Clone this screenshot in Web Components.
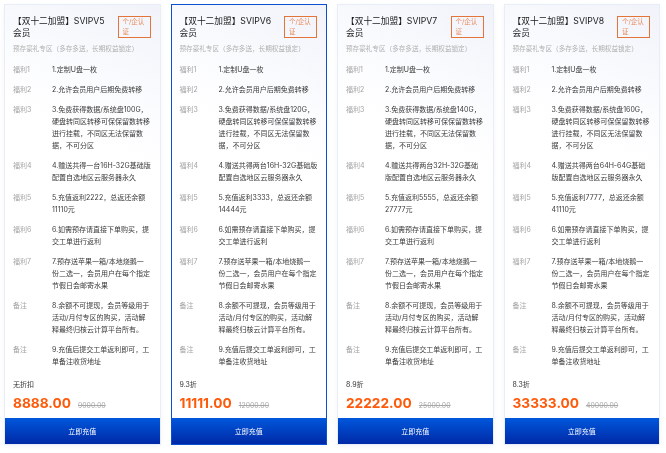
<!DOCTYPE html>
<html lang="zh">
<head>
<meta charset="utf-8">
<title>SVIP</title>
<style>
  html, body { margin: 0; padding: 0; background: #fff; }
  body { font-family: Inter, "Noto Sans CJK SC", sans-serif; }
</style>
</head>
<body>
<plan-list id="plans"></plan-list>

<template id="plan-row-tpl">
  <style>
    :host {
      display: grid;
      grid-template-columns: 39px 1fr;
      font-size: 7px;
      line-height: 12px;
      color: #3a3a3a;
    }
    .label { color: #a3a3a3; }
    .value { white-space: pre-line; }
  </style>
  <span class="label"><slot name="label"></slot></span>
  <span class="value"><slot></slot></span>
</template>

<template id="plan-card-tpl">
  <style>
    :host {
      display: flex;
      flex-direction: column;
      height: 439px;
      background: linear-gradient(205deg, #f1f3fa 0, #fbfcfe 22%, #fff 34%);
      box-shadow: 0 0 0 1px #e9edf7, 0 2px 6px rgba(60, 90, 170, 0.08);
    }
    :host([active]) { box-shadow: 0 0 0 1px #0a50d0; }
    /* the reference text is a little soft, it was scaled down */
    .title, .tag span, .sub, .rows, .discount, .price, button span { filter: blur(0.3px); }
    .head {
      display: flex;
      align-items: flex-start;
      gap: 4px;
      padding: 10px 9px 0 8px;
    }
    .title {
      flex: 1;
      font-size: 8.7px;
      line-height: 12px;
      color: #1a1a1a;
    }
    .tag {
      flex: none;
      box-sizing: border-box;
      width: 33px;
      height: 22px;
      margin-top: 1px;
      padding: 1px 4px;
      border: 1px solid #e3743a;
      font-size: 6.5px;
      line-height: 9.5px;
      color: #e88a5c;
    }
    .tag span { display: block; }
    .sub {
      margin: 4px 0 0 8px;
      font-size: 6.6px;
      line-height: 12px;
      color: #b0b0b0;
      white-space: nowrap;
    }
    .rows {
      display: flex;
      flex-direction: column;
      gap: 8px;
      padding: 9px 8px 0;
    }
    .discount {
      margin: 11px 0 0 8px;
      font-size: 7px;
      line-height: 12px;
      color: #333;
    }
    .price {
      display: flex;
      align-items: baseline;
      gap: 7px;
      margin: 4px 0 0 8px;
      line-height: 16px;
    }
    .now { font-size: 13.7px; font-weight: 700; color: #ff5a0a; }
    .old { font-size: 6.9px; color: #a8a8a8; text-decoration: line-through; }
    button {
      margin-top: auto;
      height: 26px;
      border: 0;
      padding: 0;
      font: inherit;
      font-size: 7px;
      color: #fff;
      background: linear-gradient(180deg, #0057dc, #0029a6);
    }
    button span { display: block; }
  </style>
  <div class="head">
    <div class="title"></div>
    <div class="tag"><span>个/企认证</span></div>
  </div>
  <div class="sub">预存豪礼专区（多存多送，长期权益锁定）</div>
  <div class="rows"><slot></slot></div>
  <div class="discount"></div>
  <div class="price"><span class="now"></span><span class="old"></span></div>
  <button type="button"><span>立即充值</span></button>
</template>

<script>
class PlanRow extends HTMLElement {
  constructor() {
    super();
    const tpl = document.getElementById("plan-row-tpl");
    this.attachShadow({ mode: "open" }).appendChild(tpl.content.cloneNode(true));
  }
}

class PlanCard extends HTMLElement {
  constructor() {
    super();
    const tpl = document.getElementById("plan-card-tpl");
    this.attachShadow({ mode: "open" }).appendChild(tpl.content.cloneNode(true));
  }

  connectedCallback() {
    const root = this.shadowRoot;
    root.querySelector(".title").textContent = this.getAttribute("name");
    root.querySelector(".discount").textContent = this.getAttribute("discount");
    root.querySelector(".now").textContent = this.getAttribute("price");
    root.querySelector(".old").textContent = this.getAttribute("old");
  }
}

// card contents, only the numbers differ between plans
const PLANS = [
  { level: "SVIPV5", disk: "100G", gift: "4.赠送共得一台16H-32G基础版\n配置自选地区云服务器永久", back: "2222", total: "11110", discount: "无折扣", price: "8888.00", old: "9000.00" },
  { level: "SVIPV6", disk: "120G", gift: "4.赠送共得两台16H-32G基础版\n配置自选地区云服务器永久", back: "3333", total: "14444", discount: "9.3折", price: "11111.00", old: "12000.00", active: true },
  { level: "SVIPV7", disk: "140G", gift: "4.赠送共得两台32H-32G基础\n版配置自选地区云服务器永久", back: "5555", total: "27777", discount: "8.9折", price: "22222.00", old: "25000.00" },
  { level: "SVIPV8", disk: "160G", gift: "4.赠送共得两台64H-64G基础\n版配置自选地区云服务器永久", back: "7777", total: "41110", discount: "8.3折", price: "33333.00", old: "40000.00" },
];

function rowsFor(p) {
  return [
    ["福利1", "1.定制U盘一枚"],
    ["福利2", "2.允许会员用户后期免费转移"],
    ["福利3", `3.免费获得数据/系统盘${p.disk}，\n硬盘转同区转移可保保留数转移\n进行挂载，不同区无法保留数\n据，不可分区`],
    ["福利4", p.gift],
    ["福利5", `5.充值返利${p.back}，总返还余额\n${p.total}元`],
    ["福利6", "6.如需预存请直接下单购买，提\n交工单进行返利"],
    ["福利7", "7.预存送苹果一箱/本地烧鹅一\n份二选一，会员用户在每个指定\n节假日会邮寄水果"],
    ["备注", "8.余额不可提现，会员等级用于\n活动/月付专区的购买，活动解\n释最终归核云计算平台所有。"],
    ["备注", "9.充值后提交工单返利即可，工\n单备注收货地址"],
  ];
}

class PlanList extends HTMLElement {
  constructor() {
    super();
    this.attachShadow({ mode: "open" }).innerHTML = `
      <style>
        :host {
          display: grid;
          grid-template-columns: repeat(4, 154.5px);
          gap: 12px;
          padding: 5px;
        }
      </style>
      <slot></slot>`;
  }

  connectedCallback() {
    PLANS.forEach((p) => {
      const card = document.createElement("plan-card");
      card.setAttribute("name", `【双十二加盟】${p.level} 会员`);
      card.setAttribute("discount", p.discount);
      card.setAttribute("price", p.price);
      card.setAttribute("old", p.old);
      if (p.active) card.setAttribute("active", "");
      rowsFor(p).forEach(([label, text]) => {
        const row = document.createElement("plan-row");
        const span = document.createElement("span");
        span.slot = "label";
        span.textContent = label;
        row.append(span, text);
        card.appendChild(row);
      });
      this.appendChild(card);
    });
  }
}

customElements.define("plan-row", PlanRow);
customElements.define("plan-card", PlanCard);
customElements.define("plan-list", PlanList);
</script>
</body>
</html>
